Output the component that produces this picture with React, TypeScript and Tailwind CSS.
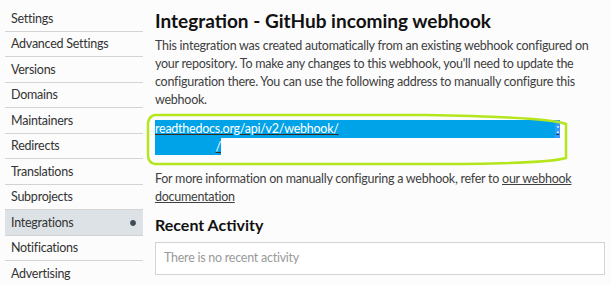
import { FaCircle } from "react-icons/fa";

const navItems = [
  "Settings",
  "Advanced Settings",
  "Versions",
  "Domains",
  "Maintainers",
  "Redirects",
  "Translations",
  "Subprojects",
  "Integrations",
  "Notifications",
  "Advertising",
];

export default function App() {
  return (
    <div className="min-h-screen h-[285px] overflow-hidden bg-[#fcfcfc] flex font-['Lato','Liberation_Sans',sans-serif] text-[#404040] tracking-[-0.25px]">
      {/* Sidebar */}
      <aside className="w-[138px] ml-[5px] pt-[6px] shrink-0">
        <ul>
          {navItems.map((item) => (
            <li
              key={item}
              className={`h-[25.5px] flex items-center justify-between pl-[6px] pr-[7px] pt-[2px] text-[12.5px] text-[#333] border-b border-[#d3d3d3] ${
                item === "Integrations" ? "bg-[#dce2e5]" : ""
              }`}
            >
              <span>{item}</span>
              {item === "Integrations" && (
                <FaCircle className="text-[#3d4b57] w-[6px] h-[6px]" />
              )}
            </li>
          ))}
        </ul>
      </aside>

      {/* Main content */}
      <main className="ml-3 flex-1 pr-[6px]">
        <h1 className="mt-[8px] text-[19px] font-bold text-[#111] leading-[26px] tracking-normal">
          Integration - GitHub incoming webhook
        </h1>
        <p className="mt-[3px] text-[12.5px] leading-[18px]">
          This integration was created automatically from an existing webhook
          configured on your repository. To make any changes to this webhook,
          you'll need to update the configuration there. You can use the
          following address to manually configure this webhook.
        </p>

        {/* Webhook address, highlighted and circled */}
        <div className="relative mt-[11px] text-[12.5px] leading-[17px]">
          <svg
            className="absolute left-[-10px] top-[-7px] pointer-events-none"
            width="430"
            height="54"
            viewBox="0 0 430 54"
          >
            <path
              d="M10 2 L280 2 Q402 4 421 11 L421 45 Q402 51 280 51 L10 51 Q3 50 3 42 L3 10 Q4 3 10 2 Z"
              fill="none"
              stroke="#b5e61d"
              strokeWidth="2.5"
            />
          </svg>
          <div className="w-[405px] h-[18px] bg-[#00a2e8] flex justify-between text-white">
            <span className="underline decoration-[#3a2a20]">
              readthedocs.org/api/v2/webhook/
            </span>
            <span className="bg-[#3399ff] px-[1px] underline decoration-[#3a2a20]">
              :
            </span>
          </div>
          <div className="w-[66px] h-[17px] bg-[#00a2e8] flex justify-end text-white">
            <span className="underline decoration-[#3a2a20]">/</span>
          </div>
        </div>

        <p className="mt-[15px] text-[12.5px] leading-[18px]">
          For more information on manually configuring a webhook, refer to{" "}
          <a className="underline decoration-[#404040]">our webhook</a>{" "}
          <a className="underline decoration-[#404040]">documentation</a>
        </p>

        <h2 className="mt-[8px] text-[16px] font-bold text-[#111] leading-[22px] tracking-normal">
          Recent Activity
        </h2>
        <div className="mt-[6px] h-[33px] w-[450px] border border-[#d4d4d4] bg-white flex items-center px-[8px] text-[12.5px] text-[#9a9a9a]">
          There is no recent activity
        </div>
      </main>
    </div>
  );
}
